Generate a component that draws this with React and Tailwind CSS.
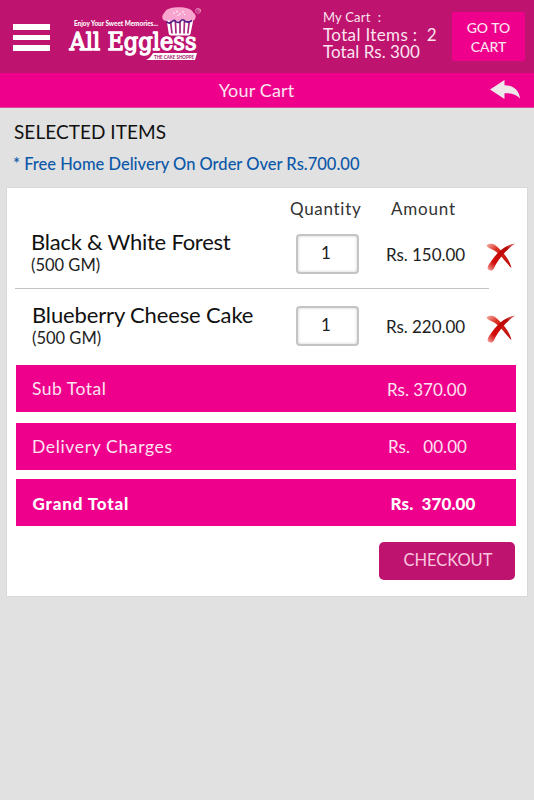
const items = [
    { name: 'Black & White Forest', weight: '(500 GM)', qty: 1, amount: 'Rs. 150.00' },
    { name: 'Blueberry Cheese Cake', weight: '(500 GM)', qty: 1, amount: 'Rs. 220.00' },
];

const Logo = () => (
    <svg className="w-[140px] h-[66px] shrink-0 overflow-visible" viewBox="66 2 140 66">
        {/* Cupcake */}
        <path d="M166.500 19l2.200 14.500q.3 2 2.500 2h17q2 0 2.400-2l2.900-14.500z" fill="#fff" />
        <path d="M170.500 21l1.500 12.500M175.300 20l.7 13.500M180 21v12.500M184.500 20l-.5 13.500M189.300 21l-1.500 12.500" stroke="#a5267c" strokeWidth="1.700" fill="none" />
        <path d="M163.500 20c-2.500-3-.5-6 1-7.500 1.500-4 8-5.300 14.500-5.300s13 1.500 14.500 5.800c2.500 1.300 3 4.500 1 6.700-1.500 1.600-3.500 1.400-4.800.2-2 2.600-5.600 2.300-7.200.2-2.200 2.200-5 2-6.600-.1-2 2.400-5.500 2.200-6.900.2-1.500 1.200-4 1-5.500-.2z" fill="#f7a5cf" />
        <path d="M166.500 21.500q2.500 2.700 5 .7 2-3.200 4.300-.7 2.500 2 4.500 0 2.500-3.400 5 .1 3.500 1.400 6.700-1.100" stroke="#4b1b82" strokeWidth="1.600" fill="none" />
        <g fill="#fff">
            <circle cx="174" cy="13" r=".8" />
            <circle cx="177" cy="11.500" r=".8" />
            <circle cx="180" cy="14" r=".8" />
            <circle cx="183" cy="12" r=".8" />
            <circle cx="178" cy="15.500" r=".7" />
            <circle cx="184.500" cy="14.500" r=".7" />
        </g>
        <circle cx="198" cy="10.800" r="2.500" fill="none" stroke="#e99ac4" strokeWidth=".7" />
        <text x="196.300" y="12" fontSize="3" fill="#f5c2dd" fontFamily="Lato, sans-serif">TM</text>
        <text x="74" y="26" fontSize="6.800" fontWeight="900" fill="#fff" fontFamily="Lato, sans-serif" textLength="84" lengthAdjust="spacingAndGlyphs">Enjoy Your Sweet Memories...</text>
        <text x="69.500" y="50" fontSize="23.500" fill="#fff" stroke="#fff" strokeWidth="1.300" strokeLinejoin="round" fontFamily="'DejaVu Serif', serif" textLength="127" lengthAdjust="spacingAndGlyphs">All Eggless</text>
        <path d="M153 53h44l-2 7h-49q4-1.500 7-7z" fill="#fff" />
        <text x="154" y="58.500" fontSize="5.300" fontWeight="700" fill="#a51264" fontFamily="Lato, sans-serif" textLength="40" lengthAdjust="spacingAndGlyphs">THE CAKE SHOPPE</text>
    </svg>
);

const BackArrow = () => (
    <svg className="w-[30px] h-[20px]" viewBox="0 0 30 20">
        <path d="M0 9.500L14.500 0v5.300C23.500 5.300 29 10 30 18.500c-4-4.300-8.500-5.500-15.500-5.300V19z" fill="#eee8eb" />
    </svg>
);

const RemoveIcon = ({ id }) => (
    <svg className="w-[30px] h-[28px]" viewBox="0 0 30 28">
        <defs>
            <linearGradient id={`${id}a`} x1="0" y1="0" x2="1" y2="1">
                <stop offset="0" stopColor="#f7b5ab" />
                <stop offset=".3" stopColor="#dc3223" />
                <stop offset="1" stopColor="#b90505" />
            </linearGradient>
            <linearGradient id={`${id}b`} x1="0" y1="1" x2="1" y2="0">
                <stop offset="0" stopColor="#f6aaa0" />
                <stop offset=".25" stopColor="#d20f0c" />
                <stop offset=".75" stopColor="#ba0808" />
                <stop offset="1" stopColor="#dc8a80" />
            </linearGradient>
        </defs>
        <path d="M.5 2.500C2 .2 7 0 10 2.700c5 4.300 13 12 15.500 22.300C20.500 20.500 15.500 12.500 9 8 6 6 1.500 5 .5 2.500z" fill={`url(#${id}a)`} />
        <path d="M29.500.5C22 5 14.500 13.500 9.200 22.500 7.500 25.700 7.500 27.500 4.300 27.500 1.200 27.200 1 24.500 2.500 22 8 14 16 2 29.500.5z" fill={`url(#${id}b)`} />
    </svg>
);

const App = () => {
    return (
        <div className="w-full min-h-screen bg-[#e1e1e1] font-[Lato,sans-serif] text-[#111]">
            {/* Header */}
            <header className="h-[73px] bg-[#be136e] flex items-start text-[#fce4f0]">
                <button className="mt-6 ml-[13px] w-[37px] flex flex-col gap-[5px]">
                    <span className="h-[5.500px] w-full bg-white" />
                    <span className="h-[5.500px] w-full bg-white" />
                    <span className="h-[5.500px] w-full bg-white" />
                </button>
                <div className="ml-4 mt-0.5"><Logo /></div>
                <div className="ml-[117px] mt-2 w-[129px] whitespace-pre">
                    <div className="text-[13px] leading-[18px] tracking-[0.2px]">My Cart  :</div>
                    <div className="text-[17px] leading-[17px] tracking-[0.35px]">Total Items :  2</div>
                    <div className="text-[17px] leading-[18px] tracking-[0.05px]">Total Rs. 300</div>
                </div>
                <button className="mt-3 w-[73px] h-[49px] bg-[#ee008c] rounded-[2px] text-[14px] leading-[19px] font-medium">
                    GO TO<br />CART
                </button>
            </header>

            <div className="h-[35px] bg-[#ee008c] border-b border-[#d9489b] grid grid-cols-[1fr_auto_1fr] items-center text-[#fce4f0]">
                <h1 className="col-start-2 text-[18px] tracking-[0.15px] ml-[-21px]">Your Cart</h1>
                <div className="justify-self-end mr-[14px]"><BackArrow /></div>
            </div>

            <div className="h-20 pl-[14px] pt-3">
                <h2 className="text-[19px] leading-6 tracking-[0.05px]">SELECTED ITEMS</h2>
                <p className="mt-2 ml-[-1px] text-[16.500px] leading-6 font-medium text-[#0b58a9]">* Free Home Delivery On Order Over Rs.700.00</p>
            </div>

            {/* Cart */}
            <main className="ml-[7px] w-[520px] h-[408px] bg-white shadow-[0_0_1px_#aaa]">
                <div className="h-[31px] pt-[9px] pl-[283px] flex text-[17px] leading-6 text-[#333]">
                    <span className="w-[101px] tracking-[0.7px]">Quantity</span>
                    <span className="tracking-[0.8px]">Amount</span>
                </div>
                {items.map((item, i) => (
                    <div key={item.name} className={i === 0 ? 'h-[69px]' : 'h-[76px] pt-[3px]'}>
                        <div className="flex items-start">
                            <div className={i === 0 ? 'w-[265px] ml-6 pt-[10px]' : 'w-[264px] ml-[25px] pt-[11px]'}>
                                <div className={i === 0 ? 'text-[22px] leading-[26px] tracking-[-0.24px] whitespace-nowrap' : 'text-[22px] leading-[26px] tracking-[-0.14px] whitespace-nowrap'}>{item.name}</div>
                                <div className="text-[16.500px] leading-[21px] text-[#222]">{item.weight}</div>
                            </div>
                            <div className="mt-[15px] w-[63px] h-10 rounded-[4px] border-2 border-[#c4c4c4] shadow-[inset_0_0_3px_#ccc] text-center text-[17px] leading-[34px] pr-[3px] text-[#222]">{item.qty}</div>
                            <div className="mt-6 ml-[27px] w-[100px] text-[17px] leading-6 tracking-[-0.05px] text-[#222]">{item.amount}</div>
                            <div className="mt-6"><RemoveIcon id={`remove${i}`} /></div>
                        </div>
                        {i === 0 && <div className="ml-[8px] mt-[12px] w-[474px] h-px bg-[#c3c3c3]" />}
                    </div>
                ))}

                <div className="ml-[8.500px] mt-px w-[500.500px] flex flex-col gap-[10.500px] text-[#fde4f1] text-[17px] whitespace-pre">
                    <div className="h-[47px] bg-[#ee008c] flex items-center pl-[16.500px] pt-0.5">
                        <span className="w-[355px] text-[17.500px] tracking-[0.5px]">Sub Total</span>
                        <span>Rs. 370.00</span>
                    </div>
                    <div className="h-[47px] bg-[#ee008c] flex items-center pl-[16.500px] pt-0.5">
                        <span className="w-[356px] text-[17.500px] tracking-[0.65px]">Delivery Charges</span>
                        <span className="tracking-[0.05px]">Rs.   00.00</span>
                    </div>
                    <div className="h-[47px] mt-[-1px] bg-[#ee008c] flex items-center pl-[17px] pt-0.5 font-black text-white">
                        <span className="w-[358px] tracking-[0.85px]">Grand Total</span>
                        <span className="tracking-[0.1px]">Rs.  370.00</span>
                    </div>
                </div>
                <button className="block mt-[15.500px] ml-[372px] w-[136px] h-[38.500px] rounded-[5px] bg-[#be136e] text-[#f8c6df] text-[16.500px] tracking-[-0.05px] pl-0.5">CHECKOUT</button>
            </main>
        </div>
    );
};
export default App;
